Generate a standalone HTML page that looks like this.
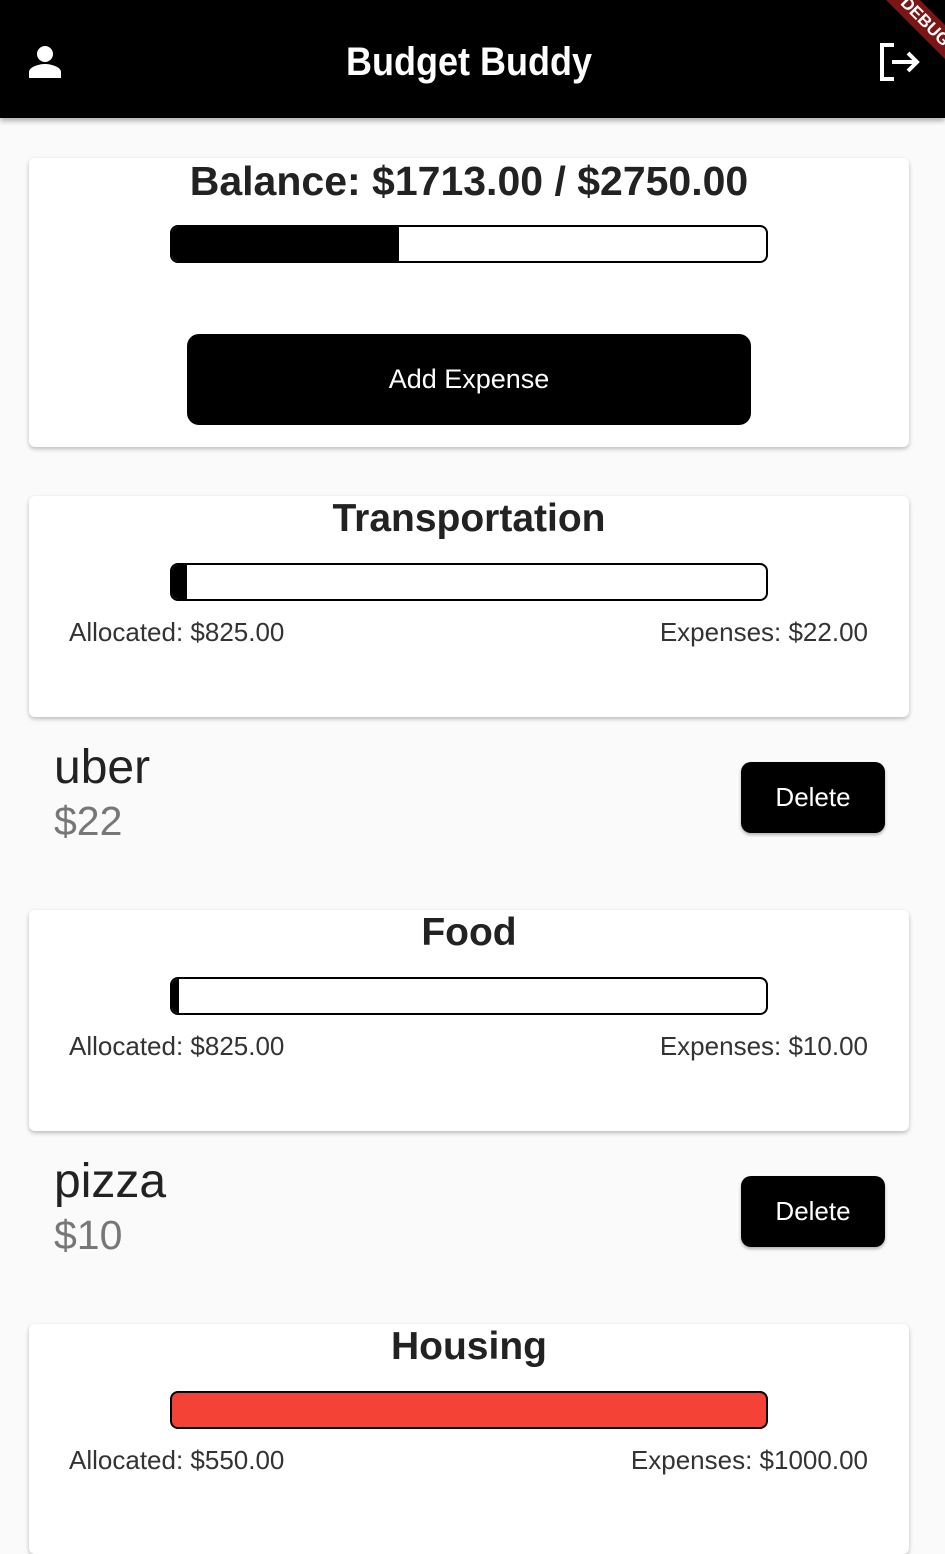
<!DOCTYPE html><html><head><style>
body{margin:0;width:945px;height:1530px;overflow:hidden;background:#fafafa;font-family:"Liberation Sans",sans-serif;position:relative}
.a{position:absolute}
.bar{position:absolute;left:170px;width:594px;height:34px;border:2px solid #000;border-radius:8px;overflow:hidden;background:#fff}
.card{position:absolute;left:29px;width:880px;background:#fff;border-radius:6px;box-shadow:0 2px 4px rgba(0,0,0,.25)}
.t{position:absolute;left:29px;width:880px;text-align:center;font-weight:bold;color:#222;font-size:39px}
.s{position:absolute;font-size:26px;color:#333}
.del{position:absolute;left:741px;width:144px;height:71px;background:#000;color:#fff;border-radius:10px;font-size:26px;line-height:71px;text-align:center;box-shadow:0 2px 3px rgba(0,0,0,.3);font-weight:500}
</style></head><body>
<div class="a" style="left:0;top:0;width:945px;height:118px;background:#000;box-shadow:0 3px 5px rgba(0,0,0,.3)"></div>
<svg class="a" style="left:26px;top:44px" width="38" height="36" viewBox="0 0 38 36"><circle cx="19" cy="10" r="8" fill="#fff"/><path d="M3 34v-6c0-5 10-8 16-8s16 3 16 8v6z" fill="#fff"/></svg>
<div class="a" style="left:29px;top:40px;width:880px;text-align:center;color:#fff;font-size:40px;font-weight:bold;transform:scaleX(.9)">Budget Buddy</div>
<svg class="a" style="left:878px;top:42px" width="44" height="40" viewBox="0 0 44 40"><path d="M16 3H4v34h12" fill="none" stroke="#fff" stroke-width="4"/><path d="M14 20h24M30 11l9 9-9 9" fill="none" stroke="#fff" stroke-width="4"/></svg>
<div class="a" style="left:855px;top:10px;width:140px;height:24px;background:#7a1616;transform:rotate(45deg);color:#fff;font-size:17px;font-weight:bold;text-align:center;line-height:24px">DEBUG</div>

<div class="card" style="top:158px;height:289px"></div>
<div class="t" style="top:158px;font-size:41px">Balance: $1713.00 / $2750.00</div>
<div class="bar" style="top:225px"><div style="width:227px;height:100%;background:#000"></div></div>
<div class="a" style="left:187px;top:334px;width:564px;height:91px;background:#000;border-radius:12px;color:#fff;font-size:27px;text-align:center;line-height:91px;font-weight:500">Add Expense</div>

<div class="card" style="top:496px;height:221px"></div>
<div class="t" style="top:497px">Transportation</div>
<div class="bar" style="top:563px"><div style="width:15px;height:100%;background:#000"></div></div>
<div class="s" style="left:69px;top:617px">Allocated: $825.00</div>
<div class="s" style="right:77px;top:617px">Expenses: $22.00</div>
<div class="a" style="left:54px;top:740px;font-size:48px;color:#222">uber</div>
<div class="a" style="left:54px;top:798px;font-size:41px;color:#777">$22</div>
<div class="del" style="top:762px">Delete</div>

<div class="card" style="top:910px;height:221px"></div>
<div class="t" style="top:911px">Food</div>
<div class="bar" style="top:977px"><div style="width:7px;height:100%;background:#000"></div></div>
<div class="s" style="left:69px;top:1031px">Allocated: $825.00</div>
<div class="s" style="right:77px;top:1031px">Expenses: $10.00</div>
<div class="a" style="left:54px;top:1154px;font-size:48px;color:#222">pizza</div>
<div class="a" style="left:54px;top:1212px;font-size:41px;color:#777">$10</div>
<div class="del" style="top:1176px">Delete</div>

<div class="card" style="top:1324px;height:230px"></div>
<div class="t" style="top:1325px">Housing</div>
<div class="bar" style="top:1391px;background:#f44336"></div>
<div class="s" style="left:69px;top:1445px">Allocated: $550.00</div>
<div class="s" style="right:77px;top:1445px">Expenses: $1000.00</div>
</body></html>
